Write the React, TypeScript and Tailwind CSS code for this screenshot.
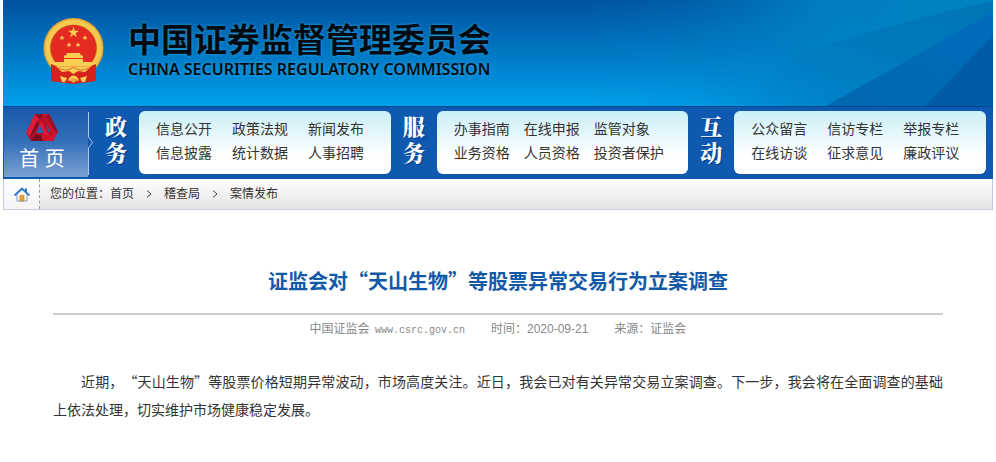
import { Fragment } from 'react'
import clsx from 'clsx'

const NAV_GROUPS = [
  {
    label: '政务',
    gap: 'gap-x-5',
    rows: [
      ['信息公开', '政策法规', '新闻发布'],
      ['信息披露', '统计数据', '人事招聘'],
    ],
  },
  {
    label: '服务',
    gap: 'gap-x-3.5',
    rows: [
      ['办事指南', '在线申报', '监管对象'],
      ['业务资格', '人员资格', '投资者保护'],
    ],
  },
  {
    label: '互动',
    gap: 'gap-x-5',
    rows: [
      ['公众留言', '信访专栏', '举报专栏'],
      ['在线访谈', '征求意见', '廉政评议'],
    ],
  },
]

const CRUMBS = ['首页', '稽查局', '案情发布']

export default function App() {
  return (
    <div
      lang="zh-CN"
      className="min-h-screen bg-white font-['Liberation_Sans','Noto_Sans_CJK_SC',sans-serif] text-[#333]"
    >
      <div className="mx-[3px]">
        <Header />
        <Nav />
        <Breadcrumb />
      </div>
      <Article />
    </div>
  )
}

function Header() {
  return (
    <header className="relative flex h-[106px] items-center bg-linear-to-b from-[#0053a0] via-[#0078c4] to-[#00a0ea] pb-1 pl-10">
      {/* Light rays on the right */}
      <svg className="absolute top-0 right-0 h-full w-[400px]" viewBox="0 0 400 106" preserveAspectRatio="none" aria-hidden="true">
        <defs>
          <linearGradient id="fade" x1="0" y1="0" x2="1" y2="0">
            <stop offset="0" stopColor="#0082c6" stopOpacity="0" />
            <stop offset="0.25" stopColor="#0082c6" stopOpacity="0.25" />
            <stop offset="0.6" stopColor="#0082c6" stopOpacity="0.9" />
            <stop offset="1" stopColor="#0084c0" />
          </linearGradient>
          <linearGradient id="mid" x1="1" y1="0" x2="0" y2="1">
            <stop offset="0" stopColor="#0074b4" />
            <stop offset="0.5" stopColor="#0078bc" stopOpacity="0.8" />
            <stop offset="1" stopColor="#0080cc" stopOpacity="0" />
          </linearGradient>
          <linearGradient id="ray" x1="0" y1="1" x2="1" y2="0">
            <stop offset="0" stopColor="#0068b0" />
            <stop offset="1" stopColor="#006cbc" />
          </linearGradient>
        </defs>
        <path d="M0 0H400V106H0Z" fill="url(#fade)" />
        <path d="M400 1Q310 20 200 56L150 106H240L400 12Z" fill="url(#mid)" />
        <path d="M233 106L400 12V106Z" fill="url(#ray)" />
        <path d="M332 106L400 35V106Z" fill="#005ca6" />
      </svg>
      <Emblem />
      <div className="relative ml-6 text-[#020a12] [text-shadow:0_0_3px_#35a5d8]">
        <h1 className="text-[33px] leading-9 font-bold whitespace-nowrap">中国证券监督管理委员会</h1>
        <p className="font-['Noto_Sans',sans-serif] text-base leading-5 font-semibold whitespace-nowrap">
          CHINA SECURITIES REGULATORY COMMISSION
        </p>
      </div>
    </header>
  )
}

function Nav() {
  return (
    <nav className="flex h-[73px] border-t border-[#004a92] bg-[#0f59b0] pr-[7px]">
      <a
        href="#home"
        className="ml-px flex h-[70px] w-[84px] shrink-0 flex-col items-center bg-linear-to-b from-[#1558aa] via-[#3470b8] to-[#7aa0d4] pt-1.5 pr-2 text-xl leading-8 text-white"
      >
        <KnotLogo />
        <span>首 页</span>
      </a>
      <svg className="h-[70px] w-[5px] shrink-0" viewBox="0 0 5 70" fill="none" aria-hidden="true">
        <path d="M.5 5V30L4.500 35.500L.5 41V68" stroke="#a9c8ec" />
      </svg>
      {NAV_GROUPS.map(group => (
        <section key={group.label} className="flex flex-1 pt-1">
          <h2 className="w-[46px] shrink-0 px-3 pt-1 font-['Liberation_Serif','Noto_Serif_CJK_SC','Noto_Sans_CJK_SC',serif] text-[22px] leading-[26px] font-black text-white [text-shadow:1px_1px_1px_#083c80]">
            {group.label}
          </h2>
          <ul
            className={clsx(
              'grid h-[63px] flex-1 grid-cols-[auto_auto_auto] content-start justify-start rounded-md bg-linear-to-b from-[#c9eff7] to-white to-70% px-[17px] pt-1.5 text-sm leading-6',
              group.gap,
            )}
          >
            {group.rows.flat().map(item => (
              <li key={item} className="whitespace-nowrap">
                <a href="#list">{item}</a>
              </li>
            ))}
          </ul>
        </section>
      ))}
    </nav>
  )
}

function Breadcrumb() {
  return (
    <div className="flex h-[31px] items-center border border-t-0 border-[#c3cbdc] bg-linear-to-b from-white to-[#e4e4e4] text-xs">
      <a href="#home" aria-label="首页" className="flex h-full w-9 items-center justify-center border-r border-dashed border-[#999] bg-linear-to-b from-white to-[#f4f4f4]">
        <HouseIcon />
      </a>
      <div className="flex items-center pl-2.5">
        <span>您的位置：</span>
        {CRUMBS.map((crumb, i) => (
          <Fragment key={crumb}>
            {i > 0 && (
              <svg className="mx-3 h-2 w-1.5" viewBox="0 0 6 8" fill="none" stroke="#444" aria-hidden="true">
                <path d="M1 .5L5 4L1 7.500" />
              </svg>
            )}
            <a href="#crumb">{crumb}</a>
          </Fragment>
        ))}
      </div>
    </div>
  )
}

function Article() {
  return (
    <article className="px-[53px] pt-14">
      <h2 className="border-b-2 border-[#ccc] pb-[17px] text-center font-['Noto_Sans_CJK_SC',sans-serif] text-xl leading-[30px] font-bold text-[#1259a8]">
        证监会对“天山生物”等股票异常交易行为立案调查
      </h2>
      <div className="flex justify-center gap-[26px] pt-1 text-xs leading-5 text-[#888]">
        <span>
          中国证监会 <span className="ml-0.5 font-['Liberation_Mono',monospace] text-[10px]">www.csrc.gov.cn</span>
        </span>
        <span>时间：2020-09-21</span>
        <span>来源：证监会</span>
      </div>
      <p className="pt-[26px] text-justify indent-7 font-['Noto_Sans_CJK_SC',sans-serif] text-sm leading-7 [text-spacing-trim:space-all]">
        近期，“天山生物”等股票价格短期异常波动，市场高度关注。近日，我会已对有关异常交易立案调查。下一步，我会将在全面调查的基础上依法处理，切实维护市场健康稳定发展。
      </p>
    </article>
  )
}

function Emblem() {
  return (
    <svg className="relative h-[66px] w-[61px] shrink-0" viewBox="0 0 61 66" aria-label="国徽" role="img">
      <circle cx="30.500" cy="30" r="30" fill="#e8a63a" />
      <circle cx="30.500" cy="30" r="28.500" fill="#f5c84e" />
      <circle cx="30.500" cy="30" r="23.500" fill="#c98a2c" />
      <circle cx="30.500" cy="30" r="23" fill="#e32b22" />
      <g fill="#f8cf52">
        <path d="M30.500 8.500L31.800 12.700H36L32.600 15.200L33.900 19.300L30.500 16.800L27.100 19.300L28.400 15.200L25 12.700H29.200Z" />
        <path id="star" d="M19 17L19.700 18.900H21.700L20.100 20.100L20.700 22L19 20.900L17.300 22L17.900 20.100L16.300 18.900H18.300Z" />
        <use href="#star" x="23" y="0" />
        <use href="#star" x="7" y="7" />
        <use href="#star" x="16" y="7" />
        <path d="M24 35H37L38 37.500H40V40H21V37.500H23Z" />
        <path d="M21 41H40V44H51L48 48.500H13L10 44H21Z" />
      </g>
      <path d="M8 46L18 50L25 53L22 65L8 63Z" fill="#d5221d" />
      <path d="M53 46L43 50L36 53L39 65L53 63Z" fill="#d5221d" />
      <path d="M18 52H43V64L30.500 66L18 64Z" fill="#d5221d" />
      <path d="M13 48.500H48L42 54L35 53L30.500 56L26 53L19 54Z" fill="#f8cf52" />
      <path d="M15 49.500Q22 54 27 51Q30.500 48 34 51Q39 54 46 49.500" fill="none" stroke="#c9552a" strokeWidth=".8" />
      <path d="M17 58L24 60L22 64H19ZM44 58L37 60L39 64H42ZM25 63Q26 58 30.500 57.500Q35 58 36 63L30.500 61Z" fill="#f8cf52" />
      <path d="M26 62L30.500 60L35 62L30.500 65Z" fill="#e8a63a" />
    </svg>
  )
}

function KnotLogo() {
  return (
    <svg className="h-[30px] w-[34px]" viewBox="0 0 34 30" aria-hidden="true">
      <path d="M10 1H24L33 19L28 28H6L1 20Z" fill="#b80f27" />
      <path d="M10 1L15 4L5 23L1 20Z" fill="#e01c38" />
      <path d="M10 1H18L15 7L12 4Z" fill="#8d1025" />
      <path d="M18 1H24L33 19L29 24Z" fill="#cf142e" />
      <path d="M24 1L33 19L30 19L20 3Z" fill="#98102a" />
      <path d="M6 28L9 22H31L28 28Z" fill="#d3122c" />
      <path d="M6 28L9 22H16L18 28Z" fill="#7c0d20" />
      <path d="M16 8L24 22H19L14 12Z" fill="#e2183a" />
      <path d="M12 8L14 11L8 21L5 23Z" fill="#7a0f22" />
      <path d="M15 12L19 20H11Z" fill="#2a64ad" />
      <path d="M21 11L25 18L23 19Z" fill="#2a64ad" />
    </svg>
  )
}

function HouseIcon() {
  return (
    <svg className="h-[15px] w-4" viewBox="0 0 16 15" aria-hidden="true">
      <path d="M11 1.500H13V5H11Z" fill="#2f6fc0" />
      <path d="M3 7L8 2.500L13 7V14H3Z" fill="#fdf6e4" stroke="#5e8cc4" strokeWidth=".8" />
      <path d="M1 8L8 1.500L15 8" fill="none" stroke="#3678cc" strokeWidth="1.800" strokeLinecap="round" strokeLinejoin="round" />
      <path d="M6 8.500H10V14H6Z" fill="#e9a532" stroke="#b97a1c" strokeWidth=".6" />
    </svg>
  )
}
